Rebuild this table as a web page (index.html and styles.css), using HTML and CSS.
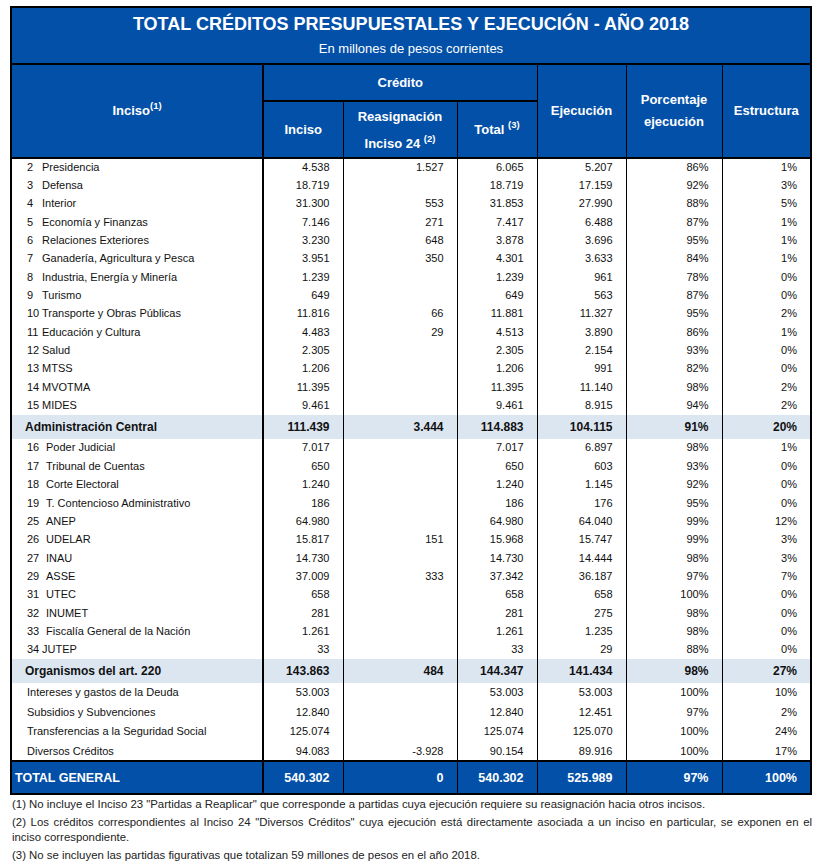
FILE: index.html
```html
<!DOCTYPE html>
<html lang="es">
<head>
<meta charset="utf-8">
<title>Total créditos presupuestales y ejecución - Año 2018</title>
<link rel="stylesheet" href="styles.css">
</head>
<body>
<div class="page">
<table class="t">
  <colgroup>
    <col class="c-name"><col class="c-inc"><col class="c-rea"><col class="c-tot"><col class="c-eje"><col class="c-por"><col class="c-est">
  </colgroup>
  <thead>
    <tr class="r-title">
      <th colspan="7" class="title">
        <div class="title-main">TOTAL CRÉDITOS PRESUPUESTALES Y EJECUCIÓN - AÑO 2018</div>
        <div class="title-sub">En millones de pesos corrientes</div>
      </th>
    </tr>
    <tr class="r-h1">
      <th rowspan="2" class="h first">Inciso<sup>(1)</sup></th>
      <th colspan="3" class="h credito">Crédito</th>
      <th rowspan="2" class="h">Ejecución</th>
      <th rowspan="2" class="h two">Porcentaje<br>ejecución</th>
      <th rowspan="2" class="h">Estructura</th>
    </tr>
    <tr class="r-h2">
      <th class="h sub">Inciso</th>
      <th class="h sub rea">Reasignación<br>Inciso 24 <sup>(2)</sup></th>
      <th class="h sub">Total <sup>(3)</sup></th>
    </tr>
  </thead>
  <tbody>
    <tr class="d"><td class="name"><span class="n">2</span>Presidencia</td><td>4.538</td><td>1.527</td><td>6.065</td><td>5.207</td><td>86%</td><td>1%</td></tr>
    <tr class="d"><td class="name"><span class="n">3</span>Defensa</td><td>18.719</td><td></td><td>18.719</td><td>17.159</td><td>92%</td><td>3%</td></tr>
    <tr class="d"><td class="name"><span class="n">4</span>Interior</td><td>31.300</td><td>553</td><td>31.853</td><td>27.990</td><td>88%</td><td>5%</td></tr>
    <tr class="d"><td class="name"><span class="n">5</span>Economía y Finanzas</td><td>7.146</td><td>271</td><td>7.417</td><td>6.488</td><td>87%</td><td>1%</td></tr>
    <tr class="d"><td class="name"><span class="n">6</span>Relaciones Exteriores</td><td>3.230</td><td>648</td><td>3.878</td><td>3.696</td><td>95%</td><td>1%</td></tr>
    <tr class="d"><td class="name"><span class="n">7</span>Ganadería, Agricultura y Pesca</td><td>3.951</td><td>350</td><td>4.301</td><td>3.633</td><td>84%</td><td>1%</td></tr>
    <tr class="d"><td class="name"><span class="n">8</span>Industria, Energía y Minería</td><td>1.239</td><td></td><td>1.239</td><td>961</td><td>78%</td><td>0%</td></tr>
    <tr class="d"><td class="name"><span class="n">9</span>Turismo</td><td>649</td><td></td><td>649</td><td>563</td><td>87%</td><td>0%</td></tr>
    <tr class="d"><td class="name"><span class="n">10</span>Transporte y Obras Públicas</td><td>11.816</td><td>66</td><td>11.881</td><td>11.327</td><td>95%</td><td>2%</td></tr>
    <tr class="d"><td class="name"><span class="n">11</span>Educación y Cultura</td><td>4.483</td><td>29</td><td>4.513</td><td>3.890</td><td>86%</td><td>1%</td></tr>
    <tr class="d"><td class="name"><span class="n">12</span>Salud</td><td>2.305</td><td></td><td>2.305</td><td>2.154</td><td>93%</td><td>0%</td></tr>
    <tr class="d"><td class="name"><span class="n">13</span>MTSS</td><td>1.206</td><td></td><td>1.206</td><td>991</td><td>82%</td><td>0%</td></tr>
    <tr class="d"><td class="name"><span class="n">14</span>MVOTMA</td><td>11.395</td><td></td><td>11.395</td><td>11.140</td><td>98%</td><td>2%</td></tr>
    <tr class="d"><td class="name"><span class="n">15</span>MIDES</td><td>9.461</td><td></td><td>9.461</td><td>8.915</td><td>94%</td><td>2%</td></tr>
    <tr class="s"><td class="name">Administración Central</td><td>111.439</td><td>3.444</td><td>114.883</td><td>104.115</td><td>91%</td><td>20%</td></tr>
    <tr class="d"><td class="name"><span class="n w">16</span>Poder Judicial</td><td>7.017</td><td></td><td>7.017</td><td>6.897</td><td>98%</td><td>1%</td></tr>
    <tr class="d"><td class="name"><span class="n w">17</span>Tribunal de Cuentas</td><td>650</td><td></td><td>650</td><td>603</td><td>93%</td><td>0%</td></tr>
    <tr class="d"><td class="name"><span class="n w">18</span>Corte Electoral</td><td>1.240</td><td></td><td>1.240</td><td>1.145</td><td>92%</td><td>0%</td></tr>
    <tr class="d"><td class="name"><span class="n w">19</span>T. Contencioso Administrativo</td><td>186</td><td></td><td>186</td><td>176</td><td>95%</td><td>0%</td></tr>
    <tr class="d"><td class="name"><span class="n w">25</span>ANEP</td><td>64.980</td><td></td><td>64.980</td><td>64.040</td><td>99%</td><td>12%</td></tr>
    <tr class="d"><td class="name"><span class="n w">26</span>UDELAR</td><td>15.817</td><td>151</td><td>15.968</td><td>15.747</td><td>99%</td><td>3%</td></tr>
    <tr class="d"><td class="name"><span class="n w">27</span>INAU</td><td>14.730</td><td></td><td>14.730</td><td>14.444</td><td>98%</td><td>3%</td></tr>
    <tr class="d"><td class="name"><span class="n w">29</span>ASSE</td><td>37.009</td><td>333</td><td>37.342</td><td>36.187</td><td>97%</td><td>7%</td></tr>
    <tr class="d"><td class="name"><span class="n w">31</span>UTEC</td><td>658</td><td></td><td>658</td><td>658</td><td>100%</td><td>0%</td></tr>
    <tr class="d"><td class="name"><span class="n w">32</span>INUMET</td><td>281</td><td></td><td>281</td><td>275</td><td>98%</td><td>0%</td></tr>
    <tr class="d"><td class="name"><span class="n w">33</span>Fiscalía General de la Nación</td><td>1.261</td><td></td><td>1.261</td><td>1.235</td><td>98%</td><td>0%</td></tr>
    <tr class="d"><td class="name"><span class="n">34</span>JUTEP</td><td>33</td><td></td><td>33</td><td>29</td><td>88%</td><td>0%</td></tr>
    <tr class="s"><td class="name">Organismos del art. 220</td><td>143.863</td><td>484</td><td>144.347</td><td>141.434</td><td>98%</td><td>27%</td></tr>
    <tr class="d e"><td class="name">Intereses y gastos de la Deuda</td><td>53.003</td><td></td><td>53.003</td><td>53.003</td><td>100%</td><td>10%</td></tr>
    <tr class="d e"><td class="name">Subsidios y Subvenciones</td><td>12.840</td><td></td><td>12.840</td><td>12.451</td><td>97%</td><td>2%</td></tr>
    <tr class="d e"><td class="name">Transferencias a la Seguridad Social</td><td>125.074</td><td></td><td>125.074</td><td>125.070</td><td>100%</td><td>24%</td></tr>
    <tr class="d e"><td class="name">Diversos Créditos</td><td>94.083</td><td>-3.928</td><td>90.154</td><td>89.916</td><td>100%</td><td>17%</td></tr>
  </tbody>
  <tfoot>
    <tr class="tot"><td class="name">TOTAL GENERAL</td><td>540.302</td><td>0</td><td>540.302</td><td>525.989</td><td>97%</td><td>100%</td></tr>
  </tfoot>
</table>
<div class="notes">
  <p>(1) No incluye el Inciso 23 "Partidas a Reaplicar" que corresponde a partidas cuya ejecución requiere su reasignación hacia otros incisos.</p>
  <p class="just">(2) Los créditos correspondientes al Inciso 24 "Diversos Créditos" cuya ejecución está directamente asociada a un inciso en particular, se exponen en el inciso correspondiente.</p>
  <p>(3) No se incluyen las partidas figurativas que totalizan 59 millones de pesos en el año 2018.</p>
</div>
</div>
</body>
</html>
```
FILE: styles.css
```css
html, body {
  margin: 0;
  padding: 0;
  background: #ffffff;
}
body {
  font-family: "Liberation Sans", Arial, sans-serif;
  color: #111111;
}
.page {
  padding: 6px 0 0 10px;
  width: 802px;
}
.t {
  width: 802px;
  table-layout: fixed;
  border-collapse: collapse;
  border: 2px solid #000;
}
.c-name { width: 252px; }
.c-inc { width: 80px; }
.c-rea { width: 114px; }
.c-tot { width: 80px; }
.c-eje { width: 89px; }
.c-por { width: 96px; }
.c-est { width: 89px; }

th, td {
  padding: 0;
}
.title {
  background: #0350a8;
  color: #fff;
  border-bottom: 2px solid #000;
  height: 55px;
  padding: 0;
  text-align: center;
  vertical-align: top;
}
.title-main {
  font-size: 18px;
  font-weight: bold;
  line-height: 24px;
  margin-top: 4px;
}
.title-sub {
  font-size: 13px;
  font-weight: normal;
  line-height: 16px;
  margin-top: 5px;
}
.h {
  background: #0350a8;
  color: #fff;
  font-size: 13px;
  font-weight: bold;
  text-align: center;
  vertical-align: middle;
  border: 1px solid #000;
  line-height: 18px;
}
.h sup {
  font-size: 9.5px;
  vertical-align: 6px;
  line-height: 0;
}
.r-h1 { height: 37px; }
.r-h2 { height: 46px; }
.h.first {
  border-right: 2px solid #000;
}
.h.credito {
  border-bottom: 2px solid #000;
}
.r-h2 .h {
  border-bottom: 2px solid #000;
}
.r-h1 .h {
  border-bottom: 2px solid #000;
}
.h.rea { line-height: 27px; padding-top: 1px; }
.h.two { line-height: 22px; }

tbody td, tfoot td {
  border-left: 1px solid #000;
  border-right: 1px solid #000;
  text-align: right;
  padding-right: 13px;
  font-size: 11px;
  white-space: nowrap;
  vertical-align: middle;
}
tbody td.name, tfoot td.name {
  text-align: left;
  padding-right: 0;
  padding-left: 13px;
  border-right: 2px solid #000;
}
tr.d { height: 18.35px; }
tr.d.e { height: 19.6px; }
tr.d td { padding-top: 0; padding-bottom: 1px; }
tr.d td.name { padding-left: 15px; }
.n {
  display: inline-block;
  width: 15px;
}
.n.w { width: 19px; }
tr.s {
  height: 24px;
  background: #dce6f1;
}
tr.s td {
  font-weight: bold;
  font-size: 12px;
  padding-top: 1px;
}
tr.tot {
  height: 33px;
  background: #0350a8;
  color: #fff;
}
tr.tot td {
  border-top: 2px solid #000;
  border-bottom: 2px solid #000;
  font-weight: bold;
  font-size: 12.5px;
}
tr.tot td.name {
  padding-left: 3px;
}
.notes {
  font-size: 11.4px;
  color: #222;
  margin-top: 2px;
  width: 800px;
  padding-left: 2px;
}
.notes p {
  margin: 0 0 3px 0;
  line-height: 15px;
}
.notes p.just {
  text-align: justify;
}
```
